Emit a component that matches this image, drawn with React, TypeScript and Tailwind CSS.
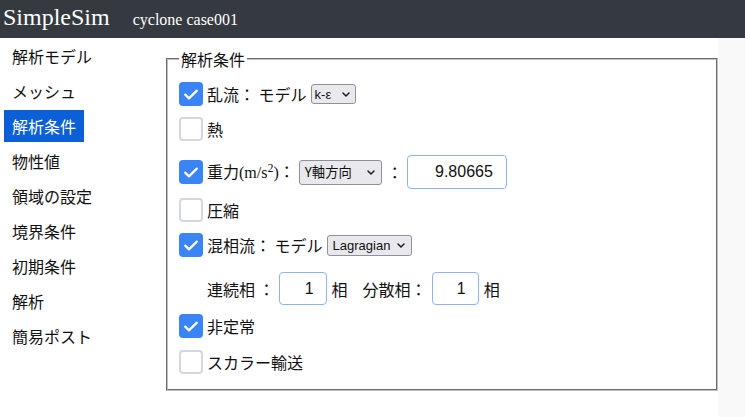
const menu = [
  "解析モデル",
  "メッシュ",
  "解析条件",
  "物性値",
  "領域の設定",
  "境界条件",
  "初期条件",
  "解析",
  "簡易ポスト",
];

function Check({ on }: { on?: boolean }) {
  if (!on) {
    return <span className="h-6 w-6 shrink-0 rounded-[4px] border-2 border-[#d3d8df] bg-white" />;
  }
  return (
    <span className="flex h-6 w-6 shrink-0 items-center justify-center rounded-[4px] bg-[#3b84f6]">
      <svg width="24" height="24" viewBox="0 0 24 24" fill="none">
        <path
          d="M6.2 12.6l3.8 3.8 7.8-7.8"
          stroke="white"
          strokeWidth="2.2"
          strokeLinecap="round"
          strokeLinejoin="round"
        />
      </svg>
    </span>
  );
}

function Chevron() {
  return (
    <svg width="8" height="5" viewBox="0 0 8 5" fill="none" className="shrink-0">
      <path d="M1 1l3 3 3-3" stroke="#1f1f1f" strokeWidth="1.5" strokeLinecap="round" strokeLinejoin="round" />
    </svg>
  );
}

export default function App() {
  return (
    <div className="flex min-h-[417px] w-[745px] flex-col bg-white font-['Noto_Sans_CJK_JP','Noto_Sans',sans-serif] text-[#111]">
      {/* top bar */}
      <header className="flex h-[38px] items-baseline bg-[#343a40] px-[3px] pt-[2px] font-['Liberation_Serif',serif] text-white">
        <span className="text-[24px] leading-[30px]">SimpleSim</span>
        <span className="ml-[23px] text-[16px]">cyclone case001</span>
      </header>

      <div className="flex flex-1">
        <nav className="flex w-[150px] flex-col items-start gap-[3px] pl-1 pt-[2px]">
          {menu.map((m) => (
            <div
              key={m}
              className={
                m === "解析条件"
                  ? "h-8 bg-[#0b5fd7] px-2 text-base leading-8 text-white"
                  : "h-8 px-2 text-base leading-8"
              }
            >
              {m}
            </div>
          ))}
        </nav>

        <main className="flex flex-1">
          <fieldset className="mb-[26px] ml-4 mt-[9px] w-[552px] border-2 border-[#c0c0c0] px-[11px] pb-[15px] pt-[11px] [border-style:groove]">
            <legend className="px-[2px] text-base leading-6">解析条件</legend>

            <div className="flex h-6 items-center gap-1 text-base">
              <Check on />
              <span>乱流： モデル</span>
              <span className="flex h-5 w-[45px] items-center justify-between rounded-[3px] border border-[#8f8f9d] bg-[#e9e9ed] pl-[3px] pr-[5px] font-['Liberation_Sans',sans-serif] text-[13px] leading-none">
                k-ε
                <Chevron />
              </span>
            </div>

            <div className="mt-[11px] flex h-6 items-center gap-1 text-base">
              <Check />
              <span>熱</span>
            </div>

            <div className="mt-[14px] flex h-[34px] items-center text-base">
              <Check on />
              <span className="ml-1">
                重力
                <span className="font-['Liberation_Serif',serif]">
                  (m/s<sup>2</sup>)
                </span>
                ：
              </span>
              <span className="ml-1 flex h-[25px] w-[83px] items-center justify-between rounded-[3px] border border-[#8f8f9d] bg-[#e9e9ed] pl-[5px] pr-[6px] text-[13.3px] leading-none">
                Y軸方向
                <Chevron />
              </span>
              <span className="ml-[5px]">：</span>
              <input
                readOnly
                value="9.80665"
                className="ml-1 h-[34px] w-[100px] rounded-[4px] border border-[#8fb3f3] bg-white pr-[13px] text-right font-['Liberation_Sans',sans-serif] text-base outline-none"
              />
            </div>

            <div className="mt-[9px] flex h-6 items-center gap-1 text-base">
              <Check />
              <span>圧縮</span>
            </div>

            <div className="mt-[11px] flex h-6 items-center gap-1 text-base">
              <Check on />
              <span>混相流： モデル</span>
              <span className="flex h-[21px] w-[85px] items-center justify-between rounded-[3px] border border-[#8f8f9d] bg-[#e9e9ed] pl-[5px] pr-[6px] font-['Liberation_Sans',sans-serif] text-[13px] leading-none">
                Lagragian
                <Chevron />
              </span>
            </div>

            <div className="mt-[15px] flex h-[33px] items-center pl-[28px] text-base">
              <span>連続相 ：</span>
              <input
                readOnly
                value="1"
                className="ml-1 h-[33px] w-[48px] rounded-[4px] border border-[#8fb3f3] bg-white pr-[12px] text-right font-['Liberation_Sans',sans-serif] text-base outline-none"
              />
              <span className="ml-[5px]">相</span>
              <span className="ml-[15px]">分散相：</span>
              <input
                readOnly
                value="1"
                className="ml-[5px] h-[33px] w-[47px] rounded-[4px] border border-[#8fb3f3] bg-white pr-[12px] text-right font-['Liberation_Sans',sans-serif] text-base outline-none"
              />
              <span className="ml-[5px]">相</span>
            </div>

            <div className="mt-[9px] flex h-6 items-center gap-1 text-base">
              <Check on />
              <span>非定常</span>
            </div>

            <div className="mt-[12px] flex h-6 items-center gap-1 text-base">
              <Check />
              <span>スカラー輸送</span>
            </div>
          </fieldset>
          <div className="flex-1 bg-[#f9f9f9]" />
        </main>
      </div>
    </div>
  );
}
